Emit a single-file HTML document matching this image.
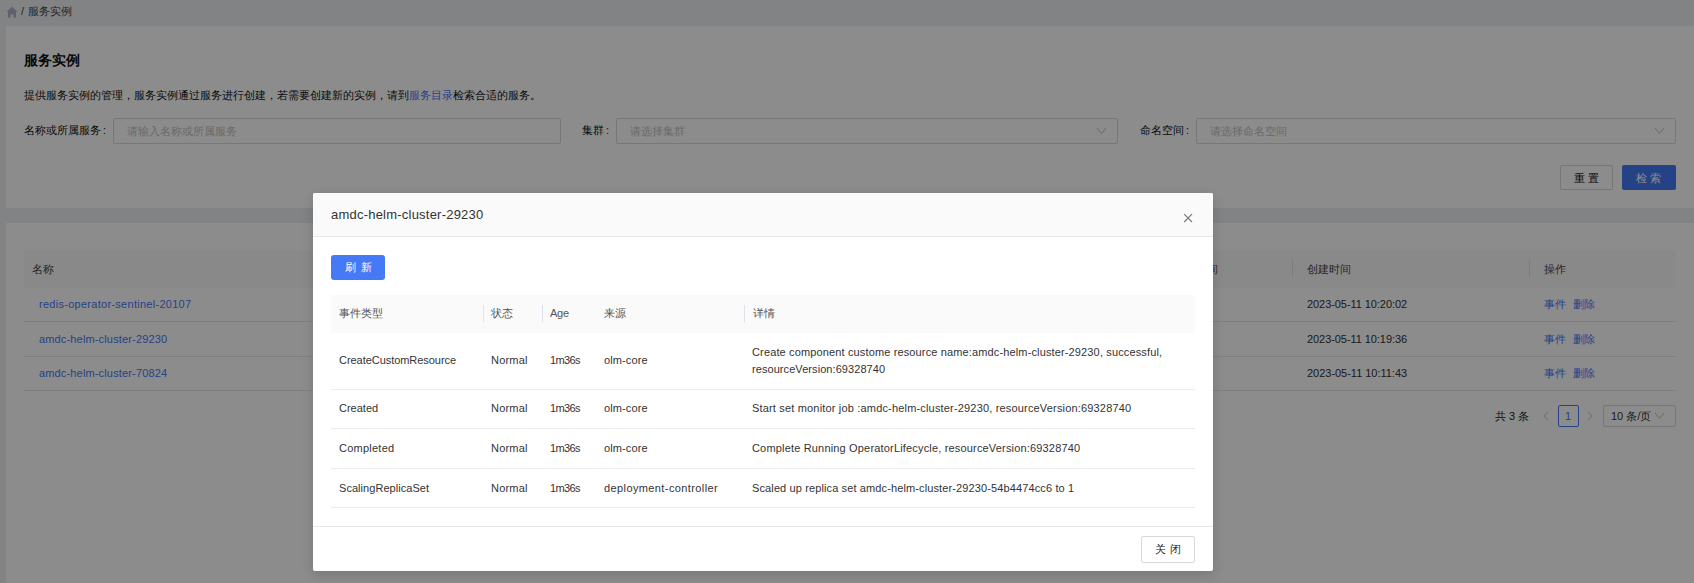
<!DOCTYPE html><html><head><meta charset="utf-8"><style>
*{box-sizing:border-box;margin:0;padding:0}
html,body{width:1694px;height:583px;overflow:hidden}
body{font-family:"Liberation Sans",sans-serif;font-size:11px;line-height:14px;color:#333;background:#eceef2;position:relative}
.a{position:absolute;white-space:nowrap}
.card{background:#fff}
.lnk{color:#4679f6}
.inp{border:1px solid #d9d9d9;border-radius:2px;background:#fff}
.dv{height:1px;background:#e8e8e8}
.sep{width:1px;background:#dfe2ea}
.chev{stroke:#bfbfbf;fill:none;stroke-width:1}
.c{display:inline-block;width:1em;text-align:center}
</style></head><body>
<svg class="a" style="left:6px;top:6px" width="12" height="12" viewBox="0 0 12 12"><path d="M6 0.8 L11.6 6 L10 6 L10 11.5 L7.4 11.5 L7.4 8.2 L4.6 8.2 L4.6 11.5 L2 11.5 L2 6 L0.4 6 Z" fill="#a9b1c4"/></svg>
<div class="a" style="left:21px;top:4px;font-size:11px;color:#444">/</div>
<div class="a" style="left:28px;top:4px;font-size:11px;color:#444"><span class="c">服</span><span class="c">务</span><span class="c">实</span><span class="c">例</span></div>
<div class="a card" style="left:6px;top:26px;width:1688px;height:182px;"></div>
<div class="a" style="left:24px;top:52px;font-size:14px;line-height:16px;font-weight:bold;color:#111"><span class="c">服</span><span class="c">务</span><span class="c">实</span><span class="c">例</span></div>
<div class="a" style="left:24px;top:88px;font-size:11px;color:#111"><span class="c">提</span><span class="c">供</span><span class="c">服</span><span class="c">务</span><span class="c">实</span><span class="c">例</span><span class="c">的</span><span class="c">管</span><span class="c">理</span><span class="c">，</span><span class="c">服</span><span class="c">务</span><span class="c">实</span><span class="c">例</span><span class="c">通</span><span class="c">过</span><span class="c">服</span><span class="c">务</span><span class="c">进</span><span class="c">行</span><span class="c">创</span><span class="c">建</span><span class="c">，</span><span class="c">若</span><span class="c">需</span><span class="c">要</span><span class="c">创</span><span class="c">建</span><span class="c">新</span><span class="c">的</span><span class="c">实</span><span class="c">例</span><span class="c">，</span><span class="c">请</span><span class="c">到</span><span class="lnk"><span class="c">服</span><span class="c">务</span><span class="c">目</span><span class="c">录</span></span><span class="c">检</span><span class="c">索</span><span class="c">合</span><span class="c">适</span><span class="c">的</span><span class="c">服</span><span class="c">务</span><span class="c">。</span></div>
<div class="a" style="left:24px;top:123px;font-size:11px;color:#111"><span class="c">名</span><span class="c">称</span><span class="c">或</span><span class="c">所</span><span class="c">属</span><span class="c">服</span><span class="c">务</span><span style="margin-left:2px">:</span></div>
<div class="a inp" style="left:113px;top:118px;width:448px;height:26px;"></div>
<div class="a" style="left:127px;top:124px;font-size:11px;color:#bfbfbf"><span class="c">请</span><span class="c">输</span><span class="c">入</span><span class="c">名</span><span class="c">称</span><span class="c">或</span><span class="c">所</span><span class="c">属</span><span class="c">服</span><span class="c">务</span></div>
<div class="a" style="left:582px;top:123px;font-size:11px;color:#111"><span class="c">集</span><span class="c">群</span><span style="margin-left:2px">:</span></div>
<div class="a inp" style="left:616px;top:118px;width:502px;height:26px;"></div>
<div class="a" style="left:630px;top:124px;font-size:11px;color:#bfbfbf"><span class="c">请</span><span class="c">选</span><span class="c">择</span><span class="c">集</span><span class="c">群</span></div>
<svg class="a" style="left:1096px;top:127px" width="11" height="8"><path class="chev" d="M1 1 L5.5 6.5 L10 1"/></svg>
<div class="a" style="left:1140px;top:123px;font-size:11px;color:#111"><span class="c">命</span><span class="c">名</span><span class="c">空</span><span class="c">间</span><span style="margin-left:2px">:</span></div>
<div class="a inp" style="left:1196px;top:118px;width:480px;height:26px;"></div>
<div class="a" style="left:1210px;top:124px;font-size:11px;color:#bfbfbf"><span class="c">请</span><span class="c">选</span><span class="c">择</span><span class="c">命</span><span class="c">名</span><span class="c">空</span><span class="c">间</span></div>
<svg class="a" style="left:1654px;top:127px" width="11" height="8"><path class="chev" d="M1 1 L5.5 6.5 L10 1"/></svg>
<div class="a " style="left:1560px;top:165px;width:53px;height:25px;border:1px solid #d9d9d9;border-radius:2px;background:#fff"></div>
<div class="a" style="left:1574px;top:171px;font-size:11px;color:#111"><span class="c">重</span> <span class="c">置</span></div>
<div class="a " style="left:1622px;top:165px;width:54px;height:25px;border-radius:2px;background:#4679f6"></div>
<div class="a" style="left:1636px;top:171px;font-size:11px;color:#fff"><span class="c">检</span> <span class="c">索</span></div>
<div class="a card" style="left:6px;top:223px;width:1688px;height:360px;"></div>
<div class="a " style="left:24px;top:250px;width:1652px;height:38px;background:#fafafa"></div>
<div class="a" style="left:32px;top:262px;font-size:11px;color:#444"><span class="c">名</span><span class="c">称</span></div>
<div class="a" style="left:1174px;top:262px;font-size:11px;color:#444"><span class="c">更</span><span class="c">新</span><span class="c">时</span><span class="c">间</span></div>
<div class="a sep" style="left:1292px;top:260px;width:1px;height:17px;"></div>
<div class="a" style="left:1307px;top:262px;font-size:11px;color:#444"><span class="c">创</span><span class="c">建</span><span class="c">时</span><span class="c">间</span></div>
<div class="a sep" style="left:1529px;top:260px;width:1px;height:17px;"></div>
<div class="a" style="left:1544px;top:262px;font-size:11px;color:#444"><span class="c">操</span><span class="c">作</span></div>
<div class="a dv" style="left:24px;top:321px;width:1652px;height:1px;"></div>
<div class="a dv" style="left:24px;top:356px;width:1652px;height:1px;"></div>
<div class="a dv" style="left:24px;top:390px;width:1652px;height:1px;"></div>
<div class="a" style="left:39px;top:297.0px;font-size:11px;letter-spacing:0.279px;color:#4679f6">redis-operator-sentinel-20107</div>
<div class="a" style="left:1307px;top:297.0px;font-size:11px;letter-spacing:-0.067px;color:#333">2023-05-11 10:20:02</div>
<div class="a" style="left:1544px;top:297.0px;font-size:11px;color:#4679f6"><span class="c">事</span><span class="c">件</span></div>
<div class="a" style="left:1573px;top:297.0px;font-size:11px;color:#4679f6"><span class="c">删</span><span class="c">除</span></div>
<div class="a" style="left:39px;top:331.5px;font-size:11px;letter-spacing:0.155px;color:#4679f6">amdc-helm-cluster-29230</div>
<div class="a" style="left:1307px;top:331.5px;font-size:11px;letter-spacing:-0.067px;color:#333">2023-05-11 10:19:36</div>
<div class="a" style="left:1544px;top:331.5px;font-size:11px;color:#4679f6"><span class="c">事</span><span class="c">件</span></div>
<div class="a" style="left:1573px;top:331.5px;font-size:11px;color:#4679f6"><span class="c">删</span><span class="c">除</span></div>
<div class="a" style="left:39px;top:366.0px;font-size:11px;letter-spacing:0.155px;color:#4679f6">amdc-helm-cluster-70824</div>
<div class="a" style="left:1307px;top:366.0px;font-size:11px;letter-spacing:-0.022px;color:#333">2023-05-11 10:11:43</div>
<div class="a" style="left:1544px;top:366.0px;font-size:11px;color:#4679f6"><span class="c">事</span><span class="c">件</span></div>
<div class="a" style="left:1573px;top:366.0px;font-size:11px;color:#4679f6"><span class="c">删</span><span class="c">除</span></div>
<div class="a" style="left:1495px;top:409px;font-size:11px;color:#222"><span class="c">共</span> 3 <span class="c">条</span></div>
<svg class="a" style="left:1542px;top:411px" width="8" height="10"><path d="M6 1 L2 5 L6 9" stroke="#c8c8c8" fill="none"/></svg>
<div class="a " style="left:1558px;top:405px;width:21px;height:22px;border:1px solid #4679f6;border-radius:2px;background:#fff"></div>
<div class="a" style="left:1565px;top:409px;font-size:11px;color:#4679f6">1</div>
<svg class="a" style="left:1586px;top:411px" width="8" height="10"><path d="M2 1 L6 5 L2 9" stroke="#c8c8c8" fill="none"/></svg>
<div class="a " style="left:1603px;top:405px;width:73px;height:22px;border:1px solid #d9d9d9;border-radius:2px;background:#fff"></div>
<div class="a" style="left:1611px;top:409px;font-size:11px;color:#333">10 <span class="c">条</span>/<span class="c">页</span></div>
<svg class="a" style="left:1654px;top:412px" width="11" height="8"><path class="chev" d="M1 1 L5.5 6.5 L10 1"/></svg>
<div class="a " style="left:0px;top:0px;width:1694px;height:583px;background:rgba(0,0,0,0.45)"></div>
<div class="a " style="left:313px;top:193px;width:900px;height:378px;background:#fff;border-radius:2px;box-shadow:0 4px 12px rgba(0,0,0,0.15)"></div>
<div class="a " style="left:313px;top:193px;width:900px;height:43px;background:#fafafa;border-radius:2px 2px 0 0"></div>
<div class="a " style="left:313px;top:236px;width:900px;height:1px;background:#e8e8e8"></div>
<div class="a" style="left:331px;top:207px;font-size:13px;letter-spacing:0.220px;line-height:16px;color:#333">amdc-helm-cluster-29230</div>
<svg class="a" style="left:1183px;top:213px" width="11" height="11"><path d="M1.2 1.2 L9 9 M9 1.2 L1.2 9" stroke="#7a7a7a" stroke-width="1.2" fill="none"/></svg>
<div class="a " style="left:331px;top:255px;width:54px;height:25px;background:#4679f6;border-radius:3px"></div>
<div class="a" style="left:345px;top:260px;font-size:11px;color:#fff"><span class="c">刷</span></div>
<div class="a" style="left:361px;top:260px;font-size:11px;color:#fff"><span class="c">新</span></div>
<div class="a " style="left:331px;top:295px;width:864px;height:38px;background:#fafafa"></div>
<div class="a" style="left:339px;top:306px;font-size:11px;color:#555"><span class="c">事</span><span class="c">件</span><span class="c">类</span><span class="c">型</span></div>
<div class="a sep" style="left:483px;top:305px;width:1px;height:17px;"></div>
<div class="a" style="left:491px;top:306px;font-size:11px;color:#555"><span class="c">状</span><span class="c">态</span></div>
<div class="a sep" style="left:542px;top:305px;width:1px;height:17px;"></div>
<div class="a" style="left:550px;top:306px;font-size:11px;letter-spacing:-0.227px;color:#555">Age</div>
<div class="a" style="left:604px;top:306px;font-size:11px;color:#555"><span class="c">来</span><span class="c">源</span></div>
<div class="a sep" style="left:744px;top:305px;width:1px;height:17px;"></div>
<div class="a" style="left:753px;top:306px;font-size:11px;color:#555"><span class="c">详</span><span class="c">情</span></div>
<div class="a " style="left:331px;top:389px;width:864px;height:1px;background:#ebebeb"></div>
<div class="a " style="left:331px;top:428px;width:864px;height:1px;background:#ebebeb"></div>
<div class="a " style="left:331px;top:468px;width:864px;height:1px;background:#ebebeb"></div>
<div class="a " style="left:331px;top:507px;width:864px;height:1px;background:#ebebeb"></div>
<div class="a" style="left:339px;top:353px;font-size:11px;letter-spacing:-0.046px;">CreateCustomResource</div>
<div class="a" style="left:491px;top:353px;font-size:11px;letter-spacing:0.199px;">Normal</div>
<div class="a" style="left:550px;top:353px;font-size:11px;letter-spacing:-0.629px;">1m36s</div>
<div class="a" style="left:604px;top:353px;font-size:11px;letter-spacing:0.119px;">olm-core</div>
<div class="a" style="left:752px;top:345px;font-size:11px;letter-spacing:0.138px;">Create component custome resource name:amdc-helm-cluster-29230, successful,</div>
<div class="a" style="left:752px;top:362px;font-size:11px;letter-spacing:0.071px;">resourceVersion:69328740</div>
<div class="a" style="left:339px;top:401px;font-size:11px;letter-spacing:-0.003px;">Created</div>
<div class="a" style="left:491px;top:401px;font-size:11px;letter-spacing:0.199px;">Normal</div>
<div class="a" style="left:550px;top:401px;font-size:11px;letter-spacing:-0.629px;">1m36s</div>
<div class="a" style="left:604px;top:401px;font-size:11px;letter-spacing:0.119px;">olm-core</div>
<div class="a" style="left:752px;top:401px;font-size:11px;letter-spacing:0.173px;">Start set monitor job :amdc-helm-cluster-29230, resourceVersion:69328740</div>
<div class="a" style="left:339px;top:441px;font-size:11px;letter-spacing:0.240px;">Completed</div>
<div class="a" style="left:491px;top:441px;font-size:11px;letter-spacing:0.199px;">Normal</div>
<div class="a" style="left:550px;top:441px;font-size:11px;letter-spacing:-0.629px;">1m36s</div>
<div class="a" style="left:604px;top:441px;font-size:11px;letter-spacing:0.119px;">olm-core</div>
<div class="a" style="left:752px;top:441px;font-size:11px;letter-spacing:0.172px;">Complete Running OperatorLifecycle, resourceVersion:69328740</div>
<div class="a" style="left:339px;top:481px;font-size:11px;letter-spacing:0.049px;">ScalingReplicaSet</div>
<div class="a" style="left:491px;top:481px;font-size:11px;letter-spacing:0.199px;">Normal</div>
<div class="a" style="left:550px;top:481px;font-size:11px;letter-spacing:-0.629px;">1m36s</div>
<div class="a" style="left:604px;top:481px;font-size:11px;letter-spacing:0.395px;">deployment-controller</div>
<div class="a" style="left:752px;top:481px;font-size:11px;letter-spacing:0.120px;">Scaled up replica set amdc-helm-cluster-29230-54b4474cc6 to 1</div>
<div class="a " style="left:313px;top:526px;width:900px;height:1px;background:#e8e8e8"></div>
<div class="a " style="left:1141px;top:536px;width:54px;height:27px;border:1px solid #d9d9d9;border-radius:2px;background:#fff"></div>
<div class="a" style="left:1155px;top:542px;font-size:11px;color:#222"><span class="c">关</span></div>
<div class="a" style="left:1170px;top:542px;font-size:11px;color:#222"><span class="c">闭</span></div>
</body></html>
